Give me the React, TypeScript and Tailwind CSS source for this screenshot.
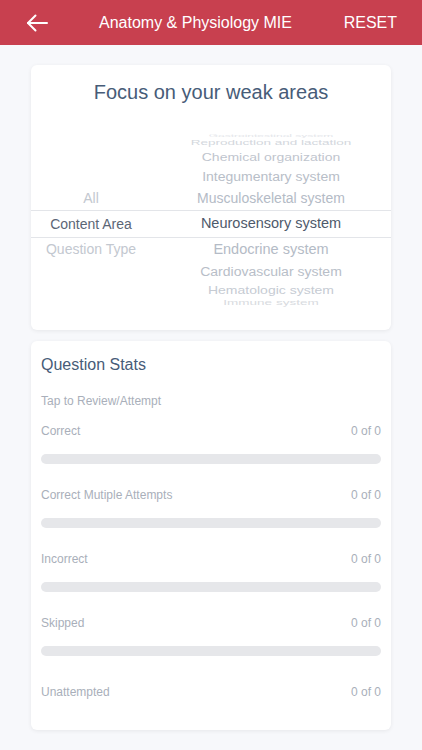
import React from 'react'

interface PickerRow {
  h: string
  left?: string
  right: string
  text: string
  leftText?: string
}

// wheel rows, top to bottom; the selected one sits between the two lines
const topRows: PickerRow[] = [
  { h: 'h-[5px]', right: 'Gastrointestinal system', text: 'text-[12px] leading-[5px] scale-y-[0.3] text-[#e4e6ea]' },
  { h: 'h-[10px]', right: 'Reproduction and lactation', text: 'text-[13.5px] leading-[10px] scale-y-[0.55] text-[#d3d7dd]' },
  { h: 'h-[17px]', right: 'Chemical organization', text: 'text-[14px] leading-none scale-y-[0.8] text-[#bfc5ce]' },
  { h: 'h-[21px]', right: 'Integumentary system', text: 'text-[14px] leading-none scale-y-[0.92] text-[#b8bec8]' },
  { h: 'h-[24px]', left: 'All', leftText: 'text-[#c3c8d0]', right: 'Musculoskeletal system', text: 'text-[14px] leading-none text-[#b4bbc6]' },
]

const bottomRows: PickerRow[] = [
  { h: 'h-[22px]', left: 'Question Type', leftText: 'text-[#c3c8d0]', right: 'Endocrine system', text: 'text-[14.5px] leading-none text-[#b4bbc6]' },
  { h: 'h-[22px]', right: 'Cardiovascular system', text: 'text-[14px] leading-none scale-y-[0.92] text-[#b8bec8]' },
  { h: 'h-[16px]', right: 'Hematologic system', text: 'text-[14px] leading-none scale-y-[0.8] text-[#c6cbd3]' },
  { h: 'h-[10px]', right: 'Immune system', text: 'text-[13.5px] leading-[10px] scale-y-[0.55] text-[#d8dbe0]' },
]

const stats = [
  { label: 'Correct', value: '0 of 0', bar: true },
  { label: 'Correct Mutiple Attempts', value: '0 of 0', bar: true },
  { label: 'Incorrect', value: '0 of 0', bar: true },
  { label: 'Skipped', value: '0 of 0', bar: true },
  { label: 'Unattempted', value: '0 of 0', bar: false },
]

function WheelRow({ row }: { row: PickerRow }) {
  return (
    <div className={`grid grid-cols-[120px_1fr] ${row.h} overflow-hidden`}>
      <div className="flex items-center justify-center">
        {row.left && <span className={`text-[14px] leading-none whitespace-nowrap ${row.leftText}`}>{row.left}</span>}
      </div>
      <div className="flex items-center justify-center">
        <span className={`whitespace-nowrap ${row.text}`}>{row.right}</span>
      </div>
    </div>
  )
}

export default function App() {
  return (
    <div className="min-h-[750px] bg-[#f7f8fb]" style={{ fontFamily: '"Liberation Sans", Arial, sans-serif' }}>
      {/* Header */}
      <div className="h-[45px] bg-[#c8404f] flex items-center text-white">
        <div className="w-[99px] pl-[25px] flex items-center">
          <svg width="24" height="24" viewBox="0 0 24 24" fill="none" stroke="white" strokeWidth="2" strokeLinecap="round" strokeLinejoin="round">
            <path d="M22 12H3" />
            <path d="M10.5 4.5L3 12l7.5 7.5" />
          </svg>
        </div>
        <span className="text-[16px]">Anatomy &amp; Physiology MIE</span>
        <span className="ml-auto pr-[25px] text-[16px]">RESET</span>
      </div>

      {/* Focus card */}
      <div className="mx-[31px] mt-[20px] bg-white rounded-md shadow-[0_1px_4px_rgba(0,0,0,0.07)] pt-[15px] pb-[22px]">
        <h2 className="text-center text-[20px] leading-6 text-[#475c78]">Focus on your weak areas</h2>
        <div className="mt-[29px]">
          {topRows.map((r, i) => <WheelRow key={i} row={r} />)}
          <div className="grid grid-cols-[120px_1fr] h-[28px] border-y border-[#e3e5e9]">
            <div className="flex items-center justify-center text-[14px] text-[#5b6676]">Content Area</div>
            <div className="flex items-center justify-center text-[14.5px] text-[#4e5a6b]">Neurosensory system</div>
          </div>
          {bottomRows.map((r, i) => <WheelRow key={i} row={r} />)}
        </div>
      </div>

      {/* Question stats card */}
      <div className="mx-[31px] mt-[11px] bg-white rounded-md shadow-[0_1px_4px_rgba(0,0,0,0.07)] px-[10px] pt-[14px] pb-[30px]">
        <h3 className="text-[16px] leading-5 text-[#475c78]">Question Stats</h3>
        <p className="mt-[18px] text-[12px] leading-4 text-[#a9afba]">Tap to Review/Attempt</p>
        <div className="mt-[14px]">
          {stats.map((s) => (
            <div key={s.label} className={s.bar ? 'h-[64px]' : 'pt-[5px]'}>
              <div className="flex justify-between text-[12px] leading-4 text-[#a9afba]">
                <span>{s.label}</span>
                <span>{s.value}</span>
              </div>
              {s.bar && <div className="mt-[15px] h-[10px] rounded-full bg-[#e6e7ea]" />}
            </div>
          ))}
        </div>
      </div>
    </div>
  )
}
